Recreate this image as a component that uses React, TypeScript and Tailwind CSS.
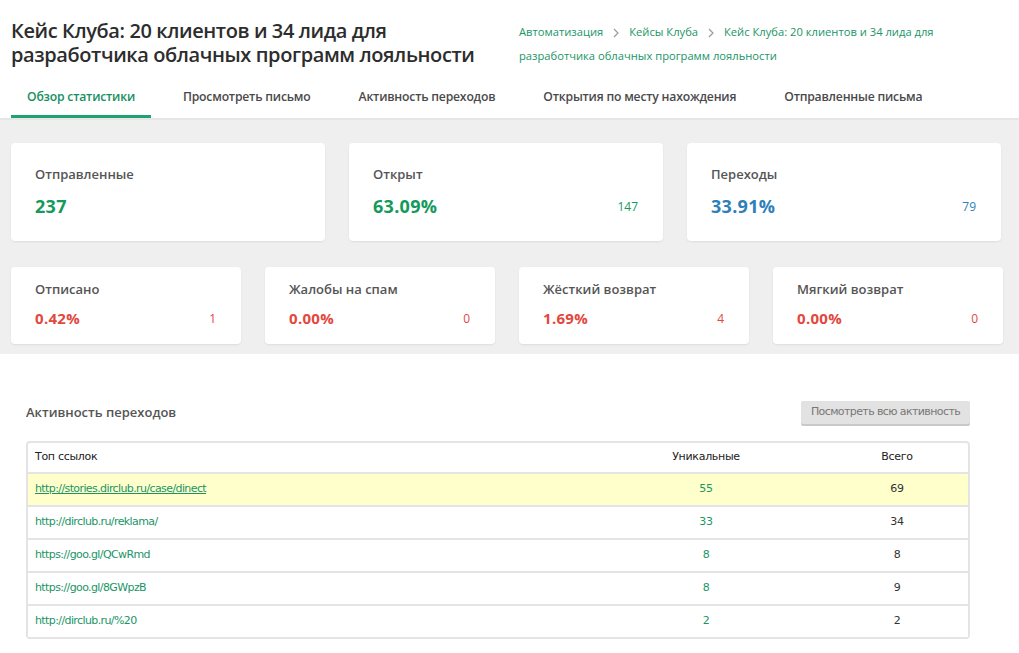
import React from "react"

const topCards = [
  { label: "Отправленные", value: "237", count: "", color: "text-[#139a5c]", countColor: "" },
  { label: "Открыт", value: "63.09%", count: "147", color: "text-[#139a5c]", countColor: "text-[#139a5c]" },
  { label: "Переходы", value: "33.91%", count: "79", color: "text-[#2f7fb8]", countColor: "text-[#2f7fb8]" },
]

const bottomCards = [
  { label: "Отписано", value: "0.42%", count: "1" },
  { label: "Жалобы на спам", value: "0.00%", count: "0" },
  { label: "Жёсткий возврат", value: "1.69%", count: "4" },
  { label: "Мягкий возврат", value: "0.00%", count: "0" },
]

const links = [
  { url: "http://stories.dirclub.ru/case/dinect", unique: "55", total: "69", active: true },
  { url: "http://dirclub.ru/reklama/", unique: "33", total: "34" },
  { url: "https://goo.gl/QCwRmd", unique: "8", total: "8" },
  { url: "https://goo.gl/8GWpzB", unique: "8", total: "9" },
  { url: "http://dirclub.ru/%20", unique: "2", total: "2" },
]

const tabs = ["Обзор статистики", "Просмотреть письмо", "Активность переходов", "Открытия по месту нахождения", "Отправленные письма"]

function Chevron() {
  return (
    <span className="inline-block w-[26px] text-center">
      <svg width="8" height="10" viewBox="0 0 8 10" className="inline-block">
        <path d="M2 1l4 4-4 4" fill="none" stroke="#9a9a9a" strokeWidth="1.2" />
      </svg>
    </span>
  )
}

export default function App() {
  return (
    <div className="w-[1019px] h-[653px] bg-white overflow-hidden font-['Open_Sans',sans-serif]">
      {/* Header */}
      <div className="flex pl-[11px] pt-[19px]">
        <h1 className="w-[508px] text-[20px] leading-[24px] font-semibold text-[#2d2d2d] tracking-[-0.4px]">
          Кейс Клуба: 20 клиентов и 34 лида для разработчика облачных программ лояльности
        </h1>
        <div className="w-[440px] text-[11.2px] leading-[24px] text-[#1a9566] pt-[1px]">
          Автоматизация<Chevron />Кейсы Клуба<Chevron />Кейс Клуба: 20 клиентов и 34 лида для разработчика облачных программ лояльности
        </div>
      </div>

      {/* Tabs */}
      <div className="mt-[14px] border-b-2 border-[#e6e6e6] pl-[11px] flex gap-[16px] text-[12.2px] font-semibold text-[#4a4a4a] tracking-[-0.2px] whitespace-nowrap">
        {tabs.map((t, i) => (
          <div
            key={t}
            className={
              i === 0
                ? "px-[16px] h-[36px] leading-[30px] text-[#169060] border-b-[3px] border-[#1fa271] -mb-[2px]"
                : "px-[16px] h-[36px] leading-[30px]"
            }
          >
            {t}
          </div>
        ))}
      </div>

      {/* Stats */}
      <div className="bg-[#efefef] px-[11px] pt-[23px] pb-[10px]">
        <div className="grid grid-cols-3 gap-[24px] w-[990px]">
          {topCards.map((c) => (
            <div key={c.label} className="bg-white rounded-[4px] shadow-[0_1px_2px_rgba(0,0,0,0.08)] h-[98px] px-[24px] pt-[22px]">
              <div className="text-[13px] font-semibold text-[#555]">{c.label}</div>
              <div className="flex items-end justify-between mt-[8px] pr-[1px]">
                <span className={"text-[18px] font-bold tracking-[0.3px] " + c.color}>{c.value}</span>
                <span className={"text-[12px] mb-[4px] " + c.countColor}>{c.count}</span>
              </div>
            </div>
          ))}
        </div>
        <div className="grid grid-cols-4 gap-[24px] w-[992px] mt-[26px]">
          {bottomCards.map((c) => (
            <div key={c.label} className="bg-white rounded-[4px] shadow-[0_1px_2px_rgba(0,0,0,0.08)] h-[77px] px-[24px] pt-[13px]">
              <div className="text-[13px] font-semibold text-[#555]">{c.label}</div>
              <div className="flex items-end justify-between mt-[7px] pr-[1px]">
                <span className="text-[15px] font-bold text-[#e2483d] tracking-[0.3px]">{c.value}</span>
                <span className="text-[12px] mb-[1px] text-[#e2483d]">{c.count}</span>
              </div>
            </div>
          ))}
        </div>
      </div>

      {/* Activity */}
      <div className="pl-[26px] w-[970px] pt-[47px]">
        <div className="flex items-center justify-between">
          <div className="text-[13px] font-semibold text-[#555]">Активность переходов</div>
          <button className="w-[169px] h-[23px] bg-[#e2e2e2] rounded-[2px] shadow-[0_2px_0_#c9c9c9] text-[11px] text-[#777] font-['DejaVu_Sans',sans-serif] tracking-[-0.6px]">
            Посмотреть всю активность
          </button>
        </div>
        <div className="mt-[17px] border-2 border-[#e4e4e4] rounded-[4px] font-['DejaVu_Sans',sans-serif] text-[11px] tracking-[-0.3px]">
          <div className="flex h-[31px] items-center border-b-2 border-[#e4e4e4] text-[#222]">
            <div className="flex-1 pl-[7px]">Топ ссылок</div>
            <div className="w-[240px] text-center">Уникальные</div>
            <div className="w-[142px] text-center">Всего</div>
          </div>
          {links.map((l, i) => (
            <div
              key={l.url}
              className={
                "flex items-center " +
                (i < links.length - 1 ? "h-[33px] border-b-2 border-[#e4e4e4] " : "h-[31px] ") +
                (l.active ? "bg-[#ffffcc]" : "bg-white")
              }
            >
              <div className={"flex-1 pl-[7px] text-[#1a9566] tracking-[-0.6px] " + (l.active ? "underline" : "")}>{l.url}</div>
              <div className="w-[240px] text-center text-[#1a9566]">{l.unique}</div>
              <div className="w-[142px] text-center text-[#333]">{l.total}</div>
            </div>
          ))}
        </div>
      </div>
    </div>
  )
}
